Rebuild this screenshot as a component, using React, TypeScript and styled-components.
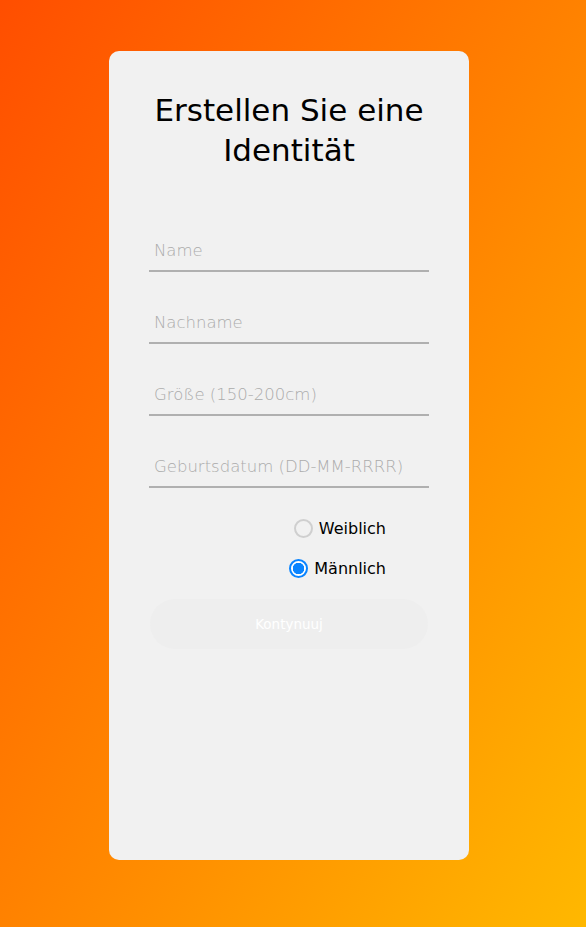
import styled, { createGlobalStyle } from 'styled-components';

const GlobalStyle = createGlobalStyle`
  html, body {
    margin: 0;
    padding: 0;
    height: 100%;
  }
  #root {
    height: 100%;
  }
`;

const Page = styled.div`
  min-height: 927px;
  width: 100%;
  box-sizing: border-box;
  background: linear-gradient(to bottom right, #ff4e00 0%, #ff8200 50%, #ffb800 100%);
  padding: 51px 8px 0 0;
  display: flex;
  justify-content: center;
  align-items: flex-start;
`;

const Card = styled.div`
  width: 360px;
  height: 809px;
  box-sizing: border-box;
  background-color: #f1f1f1;
  border-radius: 10px;
  padding: 39px 40px 0;
  display: flex;
  flex-direction: column;
  align-items: center;
`;

const Title = styled.h1`
  margin: 0 0 52px;
  font-family: 'DejaVu Sans', 'Noto Sans', sans-serif;
  font-weight: 400;
  font-size: 31px;
  line-height: 40px;
  color: #000;
  text-align: center;
`;

const Form = styled.form`
  width: 280px;
  display: flex;
  flex-direction: column;
`;

const Input = styled.input`
  width: 100%;
  box-sizing: border-box;
  height: 50px;
  padding: 8px 5px 0;
  margin-bottom: 22px;
  border: none;
  border-bottom: 2px solid #b0b0b0;
  background: transparent;
  font-family: 'DejaVu Sans', 'Noto Sans', sans-serif;
  font-size: 16.5px;
  font-weight: 300;
  color: #333;
  outline: none;

  &::placeholder {
    color: #ababab;
  }
`;

const RadioGroup = styled.div`
  display: flex;
  flex-direction: column;
  gap: 21px;
  margin-top: 9px;
  padding-right: 43px;
`;

const RadioRow = styled.label`
  display: flex;
  align-items: center;
  justify-content: flex-end;
  gap: 6px;
  font-family: 'DejaVu Sans', 'Noto Sans', sans-serif;
  font-size: 16px;
  color: #000;
  height: 19px;
`;

const Radio = styled.input`
  appearance: none;
  width: 19px;
  height: 19px;
  margin: 0;
  box-sizing: border-box;
  border-radius: 50%;
  border: 2px solid #cfcfcf;
  background: #f1f1f1;

  &:checked {
    border-color: #0a84ff;
    background: radial-gradient(circle, #0a84ff 0 5.5px, #ffffff 6px);
  }
`;

const Button = styled.button`
  margin-top: 21px;
  width: 278px;
  align-self: center;
  height: 50px;
  border: none;
  border-radius: 25px;
  background-color: #eeeeee;
  color: #ffffff;
  font-family: 'DejaVu Sans', 'Noto Sans', sans-serif;
  font-size: 13.5px;
  cursor: pointer;
`;

export default function App() {
  return (
    <>
      <GlobalStyle />
      <Page>
        <Card>
          <Title>
            Erstellen Sie eine
            <br />
            Identität
          </Title>
          <Form onSubmit={(e) => e.preventDefault()}>
            <Input type="text" placeholder="Name" />
            <Input type="text" placeholder="Nachname" />
            <Input type="text" placeholder="Größe (150-200cm)" />
            <Input type="text" placeholder="Geburtsdatum (DD-MM-RRRR)" />
            <RadioGroup>
              <RadioRow>
                <Radio type="radio" name="gender" value="f" />
                Weiblich
              </RadioRow>
              <RadioRow>
                <Radio type="radio" name="gender" value="m" defaultChecked />
                Männlich
              </RadioRow>
            </RadioGroup>
            <Button type="submit">Kontynuuj</Button>
          </Form>
        </Card>
      </Page>
    </>
  );
}
